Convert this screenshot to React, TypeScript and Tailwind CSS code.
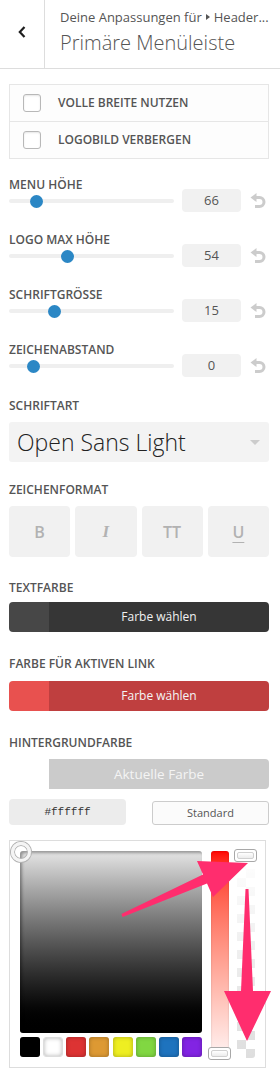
import React from 'react';

const sliders = [
  { label: 'MENU HÖHE', value: '66', pos: 27 },
  { label: 'LOGO MAX HÖHE', value: '54', pos: 58 },
  { label: 'SCHRIFTGRÖSSE', value: '15', pos: 45 },
  { label: 'ZEICHENABSTAND', value: '0', pos: 24 },
];

const palette = ['#000000', '#ffffff', '#dd3333', '#dd9933', '#eeee22', '#81d742', '#1e73be', '#8224e3'];

function ResetIcon() {
  return (
    <svg viewBox="0 0 16 16" className="w-[16px] h-[16px]">
      <path d="M5.5 4.5H9.5A4.5 4.5 0 0 1 9.5 13.5H5" fill="none" stroke="#cccccc" strokeWidth="3" />
      <polygon points="0.5,4.5 6.5,0 6.5,9" fill="#cccccc" />
    </svg>
  );
}

function Label({ children, className = '' }: { children: React.ReactNode; className?: string }) {
  return <div className={`text-[12px] font-semibold leading-[16px] text-[#555] ${className}`}>{children}</div>;
}

function Handle({ className }: { className: string }) {
  return (
    <div className={`absolute w-[23px] h-[13px] rounded-[3px] border border-[#a8a8a8] bg-white p-[2px] ${className}`}>
      <div className="h-full rounded-[2px] border border-[#d0d0d0] bg-gradient-to-b from-white to-[#ececec]" />
    </div>
  );
}

export default function App() {
  return (
    <div className="relative w-[280px] h-[1078px] bg-white overflow-hidden font-['Open_Sans',sans-serif]">
      <div className="flex h-[69px] border-b border-[#dddddd]">
        <div className="w-[45px] border-r border-[#dddddd] pt-[26px] pl-[18px]">
          <svg viewBox="0 0 8 12" className="w-[8px] h-[12px]" fill="none" stroke="#1e1e1e" strokeWidth="2.2">
            <polyline points="6.5,1 1.8,6 6.5,11" />
          </svg>
        </div>
        <div className="pl-[15px] pt-[8px]">
          <div className="flex items-center text-[13px] leading-[18px] text-[#555] whitespace-nowrap">
            Deine Anpassungen für
            <svg viewBox="0 0 4 6" className="w-[4px] h-[6px] mx-[4px]" fill="#555">
              <polygon points="0,0 4,3 0,6" />
            </svg>
            Header...
          </div>
          <div className="mt-[4px] text-[20px] font-light leading-[26px] text-[#555] whitespace-nowrap">Primäre Menüleiste</div>
        </div>
      </div>

      <div className="pl-[9px] pr-[11px]">
        <div className="mt-[15px] border border-[#e6e6e6] bg-[#fdfdfd]">
          {['VOLLE BREITE NUTZEN', 'LOGOBILD VERBERGEN'].map((t, i) => (
            <div key={t} className={`flex items-center h-[36px] ${i === 1 ? 'border-t border-[#e6e6e6] h-[37px]' : ''}`}>
              <div className="ml-[13px] w-[18px] h-[18px] rounded-[3px] border-[1.5px] border-[#b8b8b8] bg-white shadow-[inset_0_1px_2px_rgba(0,0,0,0.1)]" />
              <span className="ml-[17px] text-[12px] font-semibold text-[#555]">{t}</span>
            </div>
          ))}
        </div>

        <div className="mt-[18px] flex flex-col gap-[23px]">
          {sliders.map((s) => (
            <div key={s.label} className="flex h-[32px]">
              <div className="w-[165px]">
                <Label>{s.label}</Label>
                <div className="relative h-[16px] flex items-center">
                  <div className="w-full h-[4px] rounded-full bg-[#efefef]" />
                  <div
                    className="absolute top-[1.5px] w-[13px] h-[13px] rounded-full bg-[#2b87c5]"
                    style={{ left: s.pos - 6.5 }}
                  />
                </div>
              </div>
              <div className="ml-[8px] mt-[12px] w-[59px] h-[23px] rounded-[4px] bg-[#f1f1f1] flex items-center justify-center text-[13px] text-[#555]">
                {s.value}
              </div>
              <div className="ml-[9px] mt-[16px]">
                <ResetIcon />
              </div>
            </div>
          ))}
        </div>

        <Label className="mt-[24px]">SCHRIFTART</Label>
        <div className="mt-[8px] h-[40px] rounded-[3px] bg-[#f3f3f3] flex items-center justify-between pl-[8px] pr-[9px]">
          <span className="text-[23px] font-light text-[#222]">Open Sans Light</span>
          <svg viewBox="0 0 10 5" className="w-[10px] h-[5px]" fill="#cccccc">
            <polygon points="0,0 10,0 5,5" />
          </svg>
        </div>

        <Label className="mt-[20px]">ZEICHENFORMAT</Label>
        <div className="mt-[8px] grid grid-cols-4 gap-[5px]">
          <div className="h-[51px] rounded-[4px] bg-[#f1f1f1] flex items-center justify-center text-[16px] font-semibold text-[#b2b2b2]">B</div>
          <div className="h-[51px] rounded-[4px] bg-[#f1f1f1] flex items-center justify-center text-[17px] italic font-bold font-['Liberation_Serif',serif] text-[#b2b2b2]">I</div>
          <div className="h-[51px] rounded-[4px] bg-[#f1f1f1] flex items-center justify-center text-[16px] font-semibold text-[#b2b2b2]">TT</div>
          <div className="h-[51px] rounded-[4px] bg-[#f1f1f1] flex items-center justify-center text-[16px] font-semibold text-[#b2b2b2] underline underline-offset-[4px]">U</div>
        </div>

        <Label className="mt-[23px]">TEXTFARBE</Label>
        <div className="mt-[6px] h-[30px] rounded-[4px] overflow-hidden flex">
          <div className="w-[40px] bg-[#474747]" />
          <div className="flex-1 bg-[#363636] flex items-center justify-center text-[12px] text-[#f1f1f1]">Farbe wählen</div>
        </div>

        <Label className="mt-[24px]">FARBE FÜR AKTIVEN LINK</Label>
        <div className="mt-[9px] h-[30px] rounded-[4px] overflow-hidden flex">
          <div className="w-[40px] bg-[#e8514f]" />
          <div className="flex-1 bg-[#bf3f3f] flex items-center justify-center text-[12px] text-[#f5f5f5]">Farbe wählen</div>
        </div>

        <Label className="mt-[24px]">HINTERGRUNDFARBE</Label>
        <div className="mt-[8px] h-[30px] rounded-[4px] overflow-hidden flex">
          <div className="w-[40px] bg-white" />
          <div className="flex-1 bg-[#cbcbcb] flex items-center justify-center text-[13.5px] text-[#f4f4f4]">Aktuelle Farbe</div>
        </div>

        <div className="mt-[10px] flex items-start justify-between">
          <div className="w-[117px] h-[26px] rounded-[4px] bg-[#ececec] flex items-center justify-center font-['Liberation_Mono',monospace] text-[11px] text-[#333]">
            #ffffff
          </div>
          <div className="mt-[2px] w-[117px] h-[24px] rounded-[3px] border border-[#cccccc] bg-[#fbfbfb] flex items-center justify-center text-[11px] text-[#555]">
            Standard
          </div>
        </div>

        <div className="mt-[15px] w-[257px] h-[228px] border border-[#dddddd] pt-[10px] pl-[10px] flex items-start">
          <div className="w-[182px]">
            <div className="relative w-[182px] h-[182px] rounded-[3px] bg-gradient-to-b from-[#e6e6e6] to-black shadow-[inset_2px_2px_3px_rgba(0,0,0,0.35)]">
              <div className="absolute left-[-9px] top-[-9px] w-[20px] h-[20px] rounded-full border-[3px] border-[#f4f4f4] shadow-[0_0_0_1px_#b4b4b4,inset_0_0_0_1px_#b4b4b4]" />
            </div>
            <div className="mt-[4px] flex justify-between">
              {palette.map((c) => (
                <div
                  key={c}
                  className={`w-[20px] h-[20px] rounded-[3px] shadow-[inset_0_0_4px_rgba(0,0,0,0.3)] ${c === '#ffffff' ? 'border border-[#dddddd]' : ''}`}
                  style={{ backgroundColor: c }}
                />
              ))}
            </div>
          </div>
          <div className="relative ml-[9px] w-[18px] h-[207px] rounded-[3px] bg-gradient-to-b from-[#ff0000] to-[#fff4f4] shadow-[inset_0_0_2px_rgba(0,0,0,0.2)]">
            <Handle className="left-[-3px] top-[196px]" />
          </div>
          <div className="relative ml-[8px] w-[18px] h-[207px] rounded-[3px] overflow-visible">
            <div className="absolute inset-0 rounded-[3px] bg-[conic-gradient(#dedede_25%,#ffffff_0_50%,#dedede_0_75%,#ffffff_0)] bg-[length:18px_18px]" />
            <div className="absolute inset-0 rounded-[3px] bg-gradient-to-b from-white to-transparent" />
            <Handle className="left-[-3px] top-[-2px]" />
          </div>
        </div>
      </div>

      <svg className="absolute left-0 top-0 w-[280px] h-[1078px] pointer-events-none" viewBox="0 0 280 1078">
        <polygon
          fill="#ff2d6e"
          points="121.4,914.1 203,874.4 197,861 248,863 213,897 207,883.6 122.6,916.9"
        />
        <polygon
          fill="#ff2d6e"
          points="245.5,889 248.5,889 253,991 271,991 247,1041 224,991 241,991"
        />
      </svg>
    </div>
  );
}
